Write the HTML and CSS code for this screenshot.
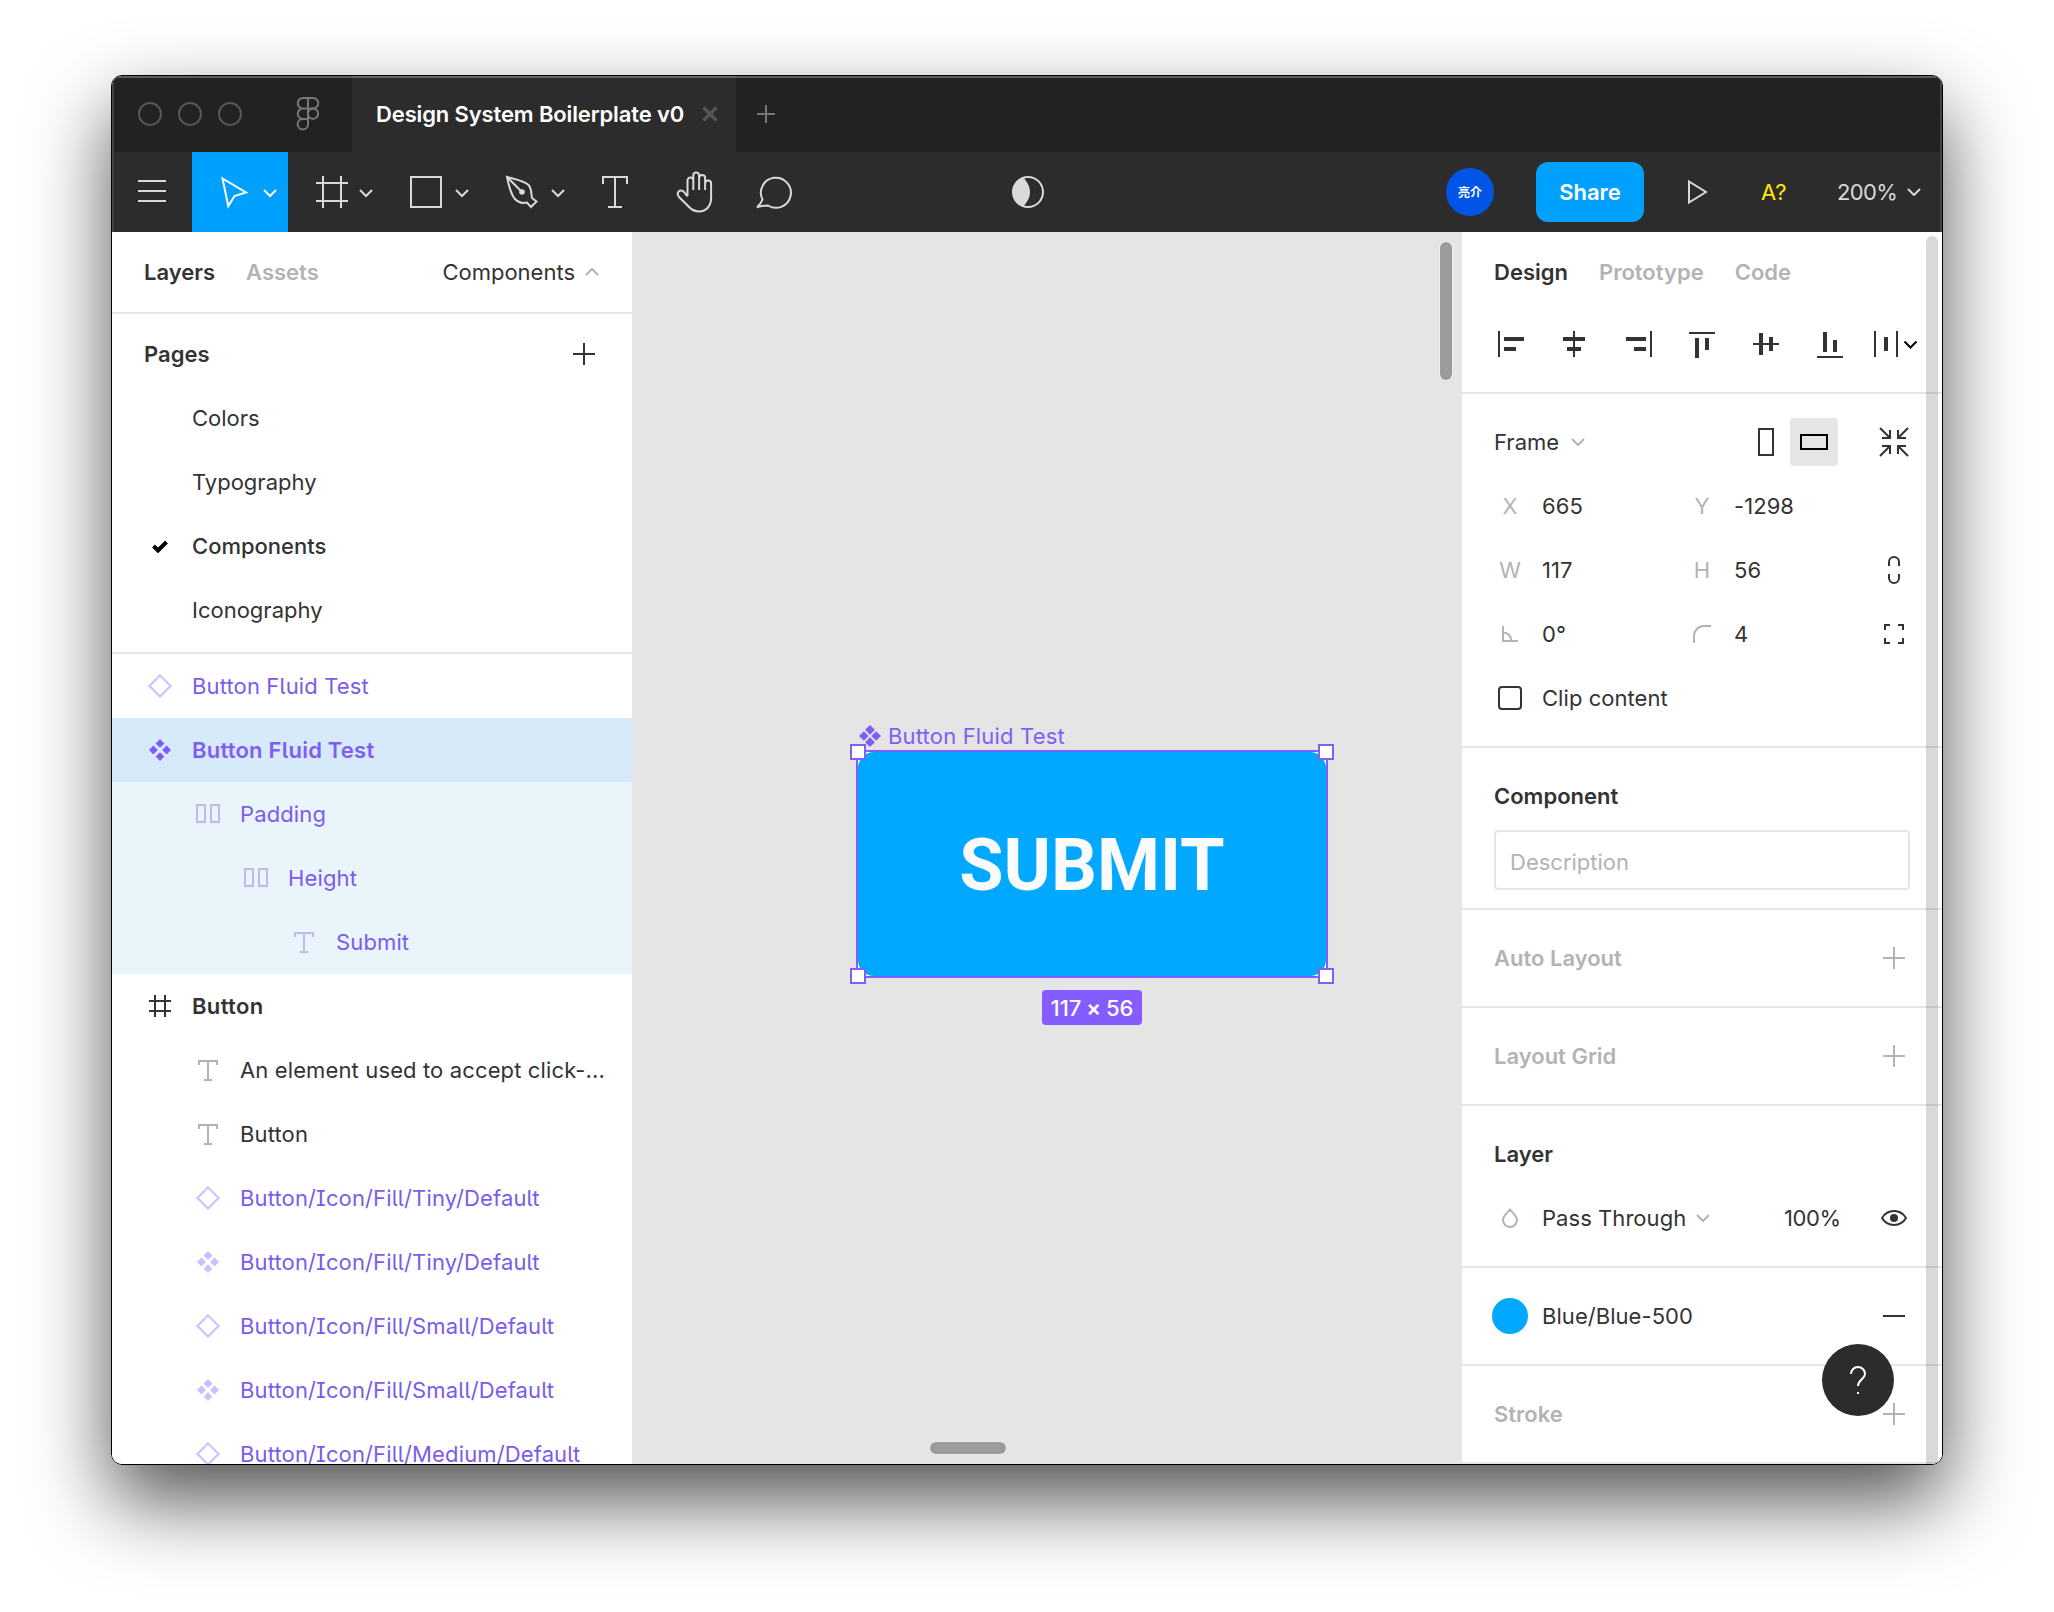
FILE: index.html
```
<!DOCTYPE html>
<html lang="en">
<head>
    <meta charset="utf-8">
    <title>Design System Boilerplate v0</title>
    <link rel="stylesheet" href="styles.css">
</head>
<body>
    <svg class="sprite">
        <symbol id="chevron" viewBox="0 0 14 8"><path d="M1 1l6 6 6-6"/></symbol>
        <symbol id="plus" viewBox="0 0 22 22"><path d="M11 0v22M0 11h22"/></symbol>
        <symbol id="diamond" viewBox="0 0 24 24"><path d="M12 1.4L22.6 12 12 22.6 1.4 12z"/></symbol>
        <symbol id="component" viewBox="0 0 24 24"><path stroke="none" fill="currentColor" d="M12 1l4.4 4.4L12 9.8 7.6 5.4zM12 14.2l4.4 4.4L12 23l-4.4-4.4zM5.4 7.6L9.8 12l-4.4 4.4L1 12zM18.6 7.6L23 12l-4.4 4.4-4.4-4.4z"/></symbol>
        <symbol id="columns" viewBox="0 0 24 24"><path d="M1 3h8v17H1zM15 3h8v17h-8z"/></symbol>
        <symbol id="text" viewBox="0 0 24 24"><path d="M3 7V3h18v4M12 3v19M8 22h8"/></symbol>
        <symbol id="frame" viewBox="0 0 24 24"><path d="M7 1v22M17 1v22M1 7h22M1 17h22"/></symbol>
    </svg>

    <div class="window">
        <div class="titlebar">
            <div class="lights"><i></i><i></i><i></i></div>
            <svg class="logo" width="24" height="34" viewBox="0 0 24 34"><path d="M12 1H7a5 5 0 0 0 0 10.5h10A5 5 0 0 0 17 1h-5zM12 1v26.5a5.2 5.2 0 1 1-5-5.5h5M7 11.5A5 5 0 0 0 7 22h5"/><circle cx="17" cy="16.7" r="5.2"/></svg>
            <div class="tab">
                <span>Design System Boilerplate v0</span>
                <svg class="close" width="16" height="16"><path d="M1.5 1.5l13 13M14.5 1.5l-13 13"/></svg>
            </div>
            <svg class="new-tab" width="18" height="18"><path d="M9 0v18M0 9h18"/></svg>
        </div>

        <div class="toolbar">
            <svg width="80" height="80"><path d="M26 29h28M26 39h28M26 49h28"/></svg>
            <svg class="active" width="96" height="80"><path d="M30.5 26.5L54 40.5 42.5 44 36.3 54z"/><path d="M72 38l6 6 6-6"/></svg>
            <svg width="96" height="80"><path d="M35 24v32M53 24v32M28 31h32M28 49h32M72 38l6 6 6-6"/></svg>
            <svg width="96" height="80"><path d="M27 25h30v30H27zM72 38l6 6 6-6"/></svg>
            <svg width="96" height="80"><path d="M27 25c7 2 17 3.500 21.500 8 3.500 4 2.500 9 3.500 13l4.500 3.500-5.500 5.500-4-4.500c-4 1-9 0-12.500-4C30 40.500 28.500 32 27 25zl15 15M72 38l6 6 6-6"/><circle cx="42" cy="40" r="2.800" fill="currentColor" stroke="none"/></svg>
            <svg width="80" height="80"><path d="M27 32v-7h24v7M39 25v30M32 55h14"/></svg>
            <svg width="80" height="80"><path d="M31.500 44V28.500a2.900 2.900 0 0 1 5.800 0V38M37.300 29v-5.500a2.900 2.900 0 0 1 5.800 0V38M43.100 26a2.900 2.900 0 0 1 6 0v12M49.100 31.500a2.900 2.900 0 0 1 6 0V46c0 8-5 13.500-12 13.500-5 0-8-2-11-5.500L23 45c-3.500-4.500 1.500-9 5-5l3.500 4.500"/></svg>
            <svg width="80" height="80"><path d="M21 55.200c3-2.500 4.500-5 5.500-7.700A15 15 0 1 1 32 53.500c-4 .2-7.500.7-11 1.700z"/></svg>
            <svg class="mask" width="32" height="32"><circle cx="16" cy="16" r="15"/><path fill="currentColor" stroke="none" d="M11.500 1.500C14 5 18 9 18 16s-4 11-6.500 14.500C5 29 1 23 1 16S5 3 11.500 1.500z"/></svg>
            <span class="avatar">亮介</span>
            <button class="share">Share</button>
            <svg class="play" width="22" height="28"><path d="M2 3.500v21L19 14z"/></svg>
            <span class="missing-font">A?</span>
            <span class="zoom">200%</span>
            <svg class="zoom-caret" width="14" height="8"><use href="#chevron"/></svg>
        </div>

        <div class="main">
            <aside class="left">
                <div class="tabs">
                    <b>Layers</b>
                    <b class="off">Assets</b>
                    <span class="page-switch">Components <svg width="14" height="8"><path d="M1 7l6-6 6 6"/></svg></span>
                </div>
                <div class="pages">
                    <div class="row head"><b>Pages</b><svg width="22" height="22"><use href="#plus"/></svg></div>
                    <div class="row page">Colors</div>
                    <div class="row page">Typography</div>
                    <div class="row page current"><svg class="check" width="16" height="14"><path d="M1.500 7l4.500 4.500L14.500 3"/></svg>Components</div>
                    <div class="row page">Iconography</div>
                </div>
                <div class="layers">
                    <div class="row purple"><svg><use href="#diamond"/></svg>Button Fluid Test</div>
                    <div class="row purple selected"><svg><use href="#component"/></svg>Button Fluid Test</div>
                    <div class="row purple inside l1"><svg><use href="#columns"/></svg>Padding</div>
                    <div class="row purple inside l2"><svg><use href="#columns"/></svg>Height</div>
                    <div class="row purple inside l3"><svg><use href="#text"/></svg>Submit</div>
                    <div class="row top"><svg><use href="#frame"/></svg>Button</div>
                    <div class="row l1"><svg><use href="#text"/></svg>An element used to accept click-...</div>
                    <div class="row l1"><svg><use href="#text"/></svg>Button</div>
                    <div class="row purple l1"><svg><use href="#diamond"/></svg>Button/Icon/Fill/Tiny/Default</div>
                    <div class="row purple l1"><svg><use href="#component"/></svg>Button/Icon/Fill/Tiny/Default</div>
                    <div class="row purple l1"><svg><use href="#diamond"/></svg>Button/Icon/Fill/Small/Default</div>
                    <div class="row purple l1"><svg><use href="#component"/></svg>Button/Icon/Fill/Small/Default</div>
                    <div class="row purple l1"><svg><use href="#diamond"/></svg>Button/Icon/Fill/Medium/Default</div>
                </div>
            </aside>

            <div class="canvas">
                <!-- selected component on the free canvas -->
                <div class="node-name"><svg width="22" height="22" viewBox="0 0 24 24"><path fill="currentColor" d="M12 0l5.300 5.300L12 10.600 6.700 5.300zM12 13.400l5.300 5.300L12 24l-5.300-5.300zM5.300 6.700l5.300 5.300-5.300 5.300L0 12zM18.700 6.700L24 12l-5.300 5.300-5.300-5.300z"/></svg>Button Fluid Test</div>
                <div class="node">
                    <div class="submit">SUBMIT</div>
                    <i class="handle tl"></i><i class="handle tr"></i><i class="handle bl"></i><i class="handle br"></i>
                </div>
                <div class="size">117 <b>×</b> 56</div>
                <i class="scroll-y"></i>
                <i class="scroll-x"></i>
            </div>

            <aside class="right">
                <div class="tabs">
                    <b>Design</b>
                    <b class="off">Prototype</b>
                    <b class="off">Code</b>
                </div>
                <div class="align">
                    <svg><path d="M20 19h2v26h-2zM26 25h20v4H26zM26 35h12v4H26z"/></svg>
                    <svg><path d="M31 19h2v26h-2zM21 25h22v4H21zM25 35h14v4H25z"/></svg>
                    <svg><path d="M44 19h2v26h-2zM20 25h20v4H20zM28 35h12v4H28z"/></svg>
                    <svg><path d="M19 20h26v2H19zM25 26h4v20h-4zM35 26h4v12h-4z"/></svg>
                    <svg><path d="M19 31h26v2H19zM25 21h4v22h-4zM35 25h4v14h-4z"/></svg>
                    <svg><path d="M19 44h26v2H19zM25 20h4v20h-4zM35 28h4v12h-4z"/></svg>
                    <svg><path d="M12 19h2v26h-2zM34 19h2v26h-2zM22 25h4v14h-4z"/><path class="line" d="M42.500 29.500l6 6 6-6"/></svg>
                </div>
                <section>
                    <div class="row frame-row">
                        <span>Frame</span>
                        <svg class="caret" width="14" height="8"><use href="#chevron"/></svg>
                        <svg class="portrait" width="16" height="28"><path d="M1 1h14v26H1z"/></svg>
                        <span class="landscape"><svg width="28" height="16"><path d="M1 1h26v14H1z"/></svg></span>
                        <svg class="shrink" width="30" height="30"><path d="M1 1l9.500 9.500M3 11h8V3M29 1l-9.500 9.500M27 11h-8V3M1 29l9.500-9.500M3 19h8v8M29 29l-9.500-9.500M27 19h-8v8"/></svg>
                    </div>
                    <div class="row fields">
                        <i>X</i><span>665</span><i>Y</i><span>-1298</span>
                    </div>
                    <div class="row fields">
                        <i>W</i><span>117</span><i>H</i><span>56</span>
                        <svg width="14" height="30"><path d="M2 11V7a5 5 0 0 1 10 0v4M2 19v4a5 5 0 0 0 10 0v-4"/></svg>
                    </div>
                    <div class="row fields">
                        <i><svg width="16" height="16"><path d="M1 0v15h15M1 6.500a8.500 8.500 0 0 1 8.500 8.500"/></svg></i><span>0°</span>
                        <i><svg class="radius" width="18" height="18"><path d="M1 18v-7A10 10 0 0 1 11 1h7"/></svg></i><span>4</span>
                        <svg width="20" height="20"><path d="M1 6V1h5M14 1h5v5M19 14v5h-5M6 19H1v-5"/></svg>
                    </div>
                    <div class="row fields">
                        <i><em class="checkbox"></em></i><span class="wide">Clip content</span>
                    </div>
                </section>
                <section>
                    <div class="row head"><b>Component</b></div>
                    <div class="description">Description</div>
                </section>
                <section>
                    <div class="row head off"><b>Auto Layout</b><svg width="22" height="22"><use href="#plus"/></svg></div>
                </section>
                <section>
                    <div class="row head off"><b>Layout Grid</b><svg width="22" height="22"><use href="#plus"/></svg></div>
                </section>
                <section>
                    <div class="row head"><b>Layer</b></div>
                    <div class="row fields">
                        <i><svg width="18" height="20"><path d="M9 1.500c2.500 3.500 7 6 7 10.500a7 7 0 0 1-14 0C2 7.500 6.500 5 9 1.500z"/></svg></i>
                        <span class="blend">Pass Through <svg class="caret" width="14" height="8"><use href="#chevron"/></svg></span>
                        <span class="opacity">100%</span>
                        <svg width="26" height="16"><path d="M1 8c3-5 7.500-7 12-7s9 2 12 7c-3 5-7.500 7-12 7S4 13 1 8z"/><circle cx="13" cy="8" r="4" fill="currentColor" stroke="none"/></svg>
                    </div>
                </section>
                <section>
                    <div class="row fields">
                        <i><em class="swatch"></em></i><span class="wide">Blue/Blue-500</span>
                        <svg width="22" height="2"><path d="M0 1h22"/></svg>
                    </div>
                </section>
                <section class="last">
                    <div class="row head off"><b>Stroke</b><svg width="22" height="22"><use href="#plus"/></svg></div>
                </section>
                <i class="scrollbar"></i>
                <div class="help"><svg width="18" height="30"><path d="M2 9a7 7 0 1 1 14 0c0 5-7 5.500-7 12M9 27v2"/></svg></div>
            </aside>
        </div>
    </div>
</body>
</html>
```
FILE: styles.css
```
* {
    box-sizing: border-box;
}
body {
    margin: 0;
    padding: 75px 0 0 111px;
    height: 1612px;
    overflow: hidden;
    background: #fff;
    font-family: Inter, "Noto Sans CJK JP", sans-serif;
    font-size: 22px;
    letter-spacing: 0;
    color: #333;
}
svg {
    display: block;
    flex: none;
    fill: none;
    stroke: currentColor;
    stroke-width: 2;
}
i, em {
    font-style: normal;
}
b {
    font-weight: 600;
}
.sprite {
    display: none;
}
.window {
    width: 1832px;
    height: 1390px;
    border: 1px solid #000;
    border-radius: 11px;
    overflow: hidden;
    box-shadow: 0 36px 80px rgba(0, 0, 0, 0.68);
}

/* title bar */
.titlebar {
    height: 76px;
    display: flex;
    align-items: center;
    background: #222;
    color: #777;
    box-shadow: inset 0 2px #5c5c5c, inset 2px 0 #444, inset -2px 0 #444;
}
.lights {
    display: flex;
    gap: 16px;
    margin-left: 26px;
}
.lights i {
    width: 24px;
    height: 24px;
    border: 2px solid #555;
    border-radius: 50%;
}
.logo {
    margin-left: 54px;
}
.tab {
    height: 76px;
    width: 384px;
    margin-left: 32px;
    padding-left: 24px;
    display: flex;
    align-items: center;
    background: #2c2c2c;
    color: #fff;
    font-weight: 600;
    letter-spacing: -0.13px;
    box-shadow: inset 0 2px #666;
}
.tab span {
    width: 326px;
    white-space: nowrap;
}
.close {
    color: #555;
    stroke-width: 3.5;
}
.new-tab {
    margin-left: 21px;
}

/* toolbar */
.toolbar {
    height: 80px;
    display: flex;
    align-items: center;
    background: #2c2c2c;
    color: #d9d9d9;
    box-shadow: inset 2px 0 #444, inset -2px 0 #444;
}
.active {
    background: #00a0ff;
    color: #fff;
}
.mask {
    margin-left: 196px;
}
.avatar {
    width: 48px;
    height: 48px;
    margin-left: 402px;
    border-radius: 50%;
    background: #0055e6;
    color: #fff;
    font: bold 12px/48px "Noto Sans CJK JP", sans-serif;
    text-align: center;
}
.share {
    width: 108px;
    height: 60px;
    margin-left: 42px;
    padding: 0;
    border: 0;
    border-radius: 12px;
    background: #00a0ff;
    color: #fff;
    font: 600 22px Inter, sans-serif;
}
.play {
    margin-left: 43px;
}
.missing-font {
    margin-left: 52px;
    width: 76px;
    color: #ffeb00;
    letter-spacing: 0.4px;
}
.zoom {
    width: 70px;
    letter-spacing: -0.6px;
}

/* panels */
.main {
    display: flex;
    height: 1232px;
}
.left {
    width: 520px;
    background: #fff;
}
.right {
    position: relative;
    width: 480px;
    background: #fff;
}
.tabs {
    height: 80px;
    padding-left: 32px;
    display: flex;
    align-items: center;
    gap: 31px;
}
.left .tabs {
    height: 82px;
    border-bottom: 2px solid #e5e5e5;
}
.off {
    color: #b3b3b3;
}
.page-switch {
    display: flex;
    align-items: center;
    gap: 10px;
    margin-left: auto;
    margin-right: 33px;
}
.page-switch svg, .caret {
    color: #b3b3b3;
}
.row {
    height: 64px;
    display: flex;
    align-items: center;
    white-space: nowrap;
}
.head {
    justify-content: space-between;
    padding: 0 37px 0 32px;
}
.pages {
    padding: 8px 0 10px;
    border-bottom: 2px solid #e5e5e5;
}
.page {
    padding-left: 80px;
}
.current {
    padding-left: 40px;
    font-weight: 500;
}
.check {
    margin-right: 24px;
    color: #000;
    stroke-width: 4;
}

/* layer list */
.layers {
    letter-spacing: 0.13px;
}
.layers .row {
    padding-left: 36px;
}
.layers .l1 {
    padding-left: 84px;
}
.layers .l2 {
    padding-left: 132px;
}
.layers .l3 {
    padding-left: 180px;
}
.layers svg {
    width: 24px;
    height: 24px;
    margin-right: 20px;
    color: #b3b3b3;
}
.layers .purple {
    color: #7b5bee;
    font-feature-settings: "cv05", "cv08";
}
.layers .purple svg {
    color: #cabfff;
}
.layers .selected {
    background: #d7eaf9;
    color: #7f5cf5;
    font-weight: 600;
    letter-spacing: 0.22px;
}
.layers .selected svg {
    color: #7f5cff;
}
.layers .inside {
    background: #eaf5fb;
}
.layers .inside svg {
    color: #bfb8f5;
}
.layers .top {
    font-weight: 600;
    letter-spacing: 0.35px;
}
.layers .top svg {
    color: #333;
}

/* canvas */
.canvas {
    position: relative;
    width: 830px;
    background: #e5e5e5;
}
.node-name {
    position: absolute;
    left: 227px;
    top: 490px;
    display: flex;
    align-items: center;
    gap: 7px;
    color: #7f5ff5;
    line-height: 28px;
    letter-spacing: 0.18px;
}
.node-name svg {
    stroke: none;
}
.node {
    position: absolute;
    left: 224px;
    top: 518px;
    width: 472px;
    height: 228px;
    border: 2px solid #7f5ff5;
    background: #fff;
}
.submit {
    height: 224px;
    border-radius: 16px;
    background: #00a8ff;
    color: #f8fafb;
    font: bold 72px/228px Roboto, sans-serif;
    letter-spacing: 0;
    text-align: center;
}
.handle {
    position: absolute;
    width: 16px;
    height: 16px;
    border: 2px solid #7f5ff5;
    background: #fff;
}
.tl { left: -8px; top: -8px; }
.tr { right: -8px; top: -8px; }
.bl { left: -8px; bottom: -8px; }
.br { right: -8px; bottom: -8px; }
.size {
    position: absolute;
    left: 410px;
    top: 758px;
    width: 100px;
    height: 35px;
    border-radius: 4px;
    background: #855cff;
    color: #fff;
    font-weight: 500;
    line-height: 36px;
    text-align: center;
    word-spacing: -1px;
}
.scroll-y, .scroll-x {
    position: absolute;
    border-radius: 6px;
    background: #9b9b9b;
    box-shadow: 0 0 0 1px #eee;
}
.scroll-y {
    right: 10px;
    top: 10px;
    width: 12px;
    height: 138px;
}
.scroll-x {
    left: 298px;
    bottom: 10px;
    width: 76px;
    height: 12px;
}

/* properties */
.align {
    display: flex;
    height: 80px;
    padding-left: 16px;
}
.align svg {
    width: 64px;
    height: 64px;
    fill: currentColor;
    stroke: none;
}
.align .line {
    fill: none;
    stroke: #000;
}
.right section {
    padding: 16px 0;
    border-top: 2px solid #e5e5e5;
}
.right .last {
    border-bottom: 2px solid #e5e5e5;
}
.frame-row {
    padding-left: 32px;
}
.frame-row > span:first-child {
    width: 77px;
}
.portrait {
    margin-left: 173px;
}
.landscape {
    width: 48px;
    height: 48px;
    margin: 0 41px 0 16px;
    display: grid;
    place-items: center;
    border-radius: 4px;
    background: #e5e5e5;
    color: #000;
}
.fields {
    display: grid;
    grid-template-columns: 64px 128px 64px 128px 64px;
    padding-left: 16px;
}
.fields i {
    color: #b3b3b3;
    display: grid;
    place-items: center;
}
.fields > span {
    letter-spacing: 0.05px;
}
.fields > svg {
    grid-column: 5;
    justify-self: center;
}
.wide {
    grid-column: 2 / 5;
}
.checkbox {
    width: 24px;
    height: 24px;
    border: 2px solid #333;
    border-radius: 4px;
}
.swatch {
    width: 36px;
    height: 36px;
    border-radius: 50%;
    background: #00a8ff;
}
.description {
    height: 60px;
    margin: 2px 32px 2px;
    padding-left: 14px;
    border: 2px solid #e5e5e5;
    border-radius: 4px;
    color: #b3b3b3;
    line-height: 60px;
}
.blend {
    grid-column: 2 / 4;
    display: flex;
    align-items: center;
    gap: 10px;
}
.fields .opacity {
    padding-left: 50px;
    letter-spacing: -0.4px;
}
.scrollbar {
    position: absolute;
    right: 4px;
    top: 4px;
    bottom: 0;
    width: 12px;
    border-radius: 6px 6px 0 0;
    background: rgba(0, 0, 0, 0.15);
}
.help {
    position: absolute;
    right: 48px;
    bottom: 48px;
    width: 72px;
    height: 72px;
    display: grid;
    place-items: center;
    border-radius: 50%;
    background: #2c2c2c;
    color: #fff;
}
```
